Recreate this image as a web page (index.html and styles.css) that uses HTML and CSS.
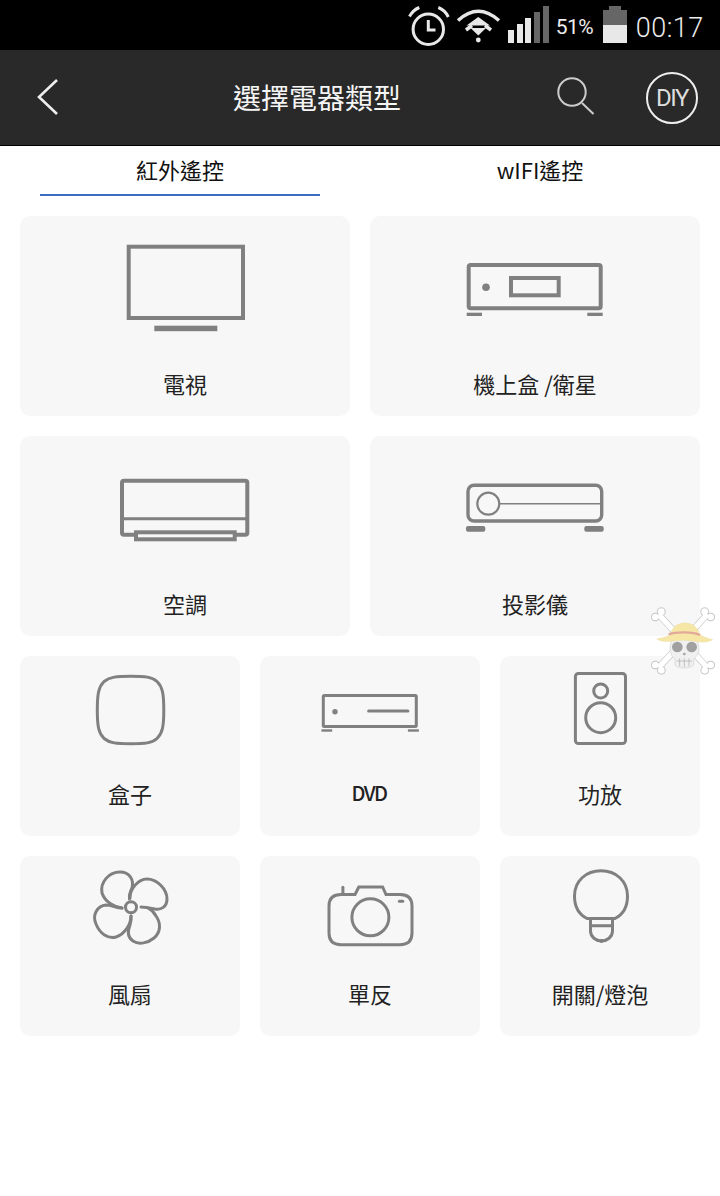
FILE: index.html
```html
<!DOCTYPE html>
<html lang="zh-Hant">
<head>
    <meta charset="UTF-8">
    <meta name="viewport" content="width=device-width, initial-scale=1.0">
    <title>選擇電器類型</title>
    <link rel="stylesheet" href="styles.css">
</head>
<body>
    <div class="status-bar">
        <svg class="status-alarm" width="44" height="50" viewBox="406 0 44 50">
            <circle cx="428.3" cy="29.3" r="15.2"/>
            <path d="M428.3 20V30H435.5"/>
            <path d="M409.5 16.5Q413 10 419.3 7.5M438.3 7.5Q445 10 448.3 17"/>
        </svg>
        <svg class="status-wifi" width="46" height="50" viewBox="456 0 46 50">
            <path class="wifi-arc" d="M458 20.5Q478.3 2 499 20.5"/>
            <path class="wifi-arc" d="M466 30Q470 27 472 25.5M491 30Q487 27 485 25.5"/>
            <path class="wifi-fill" d="M478.3 17L490 25.5H466.5ZM470.5 28H486L478.3 35.5Z"/>
            <circle class="wifi-fill" cx="478.3" cy="40" r="2.4"/>
        </svg>
        <div class="signal">
            <span class="signal-bar bar-1"></span>
            <span class="signal-bar bar-2"></span>
            <span class="signal-bar bar-3"></span>
            <span class="signal-bar bar-4 dim"></span>
            <span class="signal-bar bar-5 dim"></span>
        </div>
        <span class="status-percent">51%</span>
        <div class="battery">
            <span class="battery-nib"></span>
            <span class="battery-body"></span>
        </div>
        <span class="status-time">00:17</span>
    </div>

    <header class="app-bar">
        <svg class="back-icon" width="24" height="40" viewBox="0 0 24 40">
            <path d="M20 2L2 19L20 36"/>
        </svg>
        <h1 class="app-title">選擇電器類型</h1>
        <svg class="search-icon" width="40" height="40" viewBox="0 0 40 40">
            <circle cx="16" cy="15" r="13.7"/>
            <path d="M26 26L37.5 37"/>
        </svg>
        <div class="diy-btn">DIY</div>
    </header>

    <nav class="tabs">
        <div class="tab active">紅外遙控</div>
        <div class="tab">wIFI遙控</div>
    </nav>

    <main class="device-list">
        <div class="device-row">
            <div class="device-card big">
                <svg class="device-icon" viewBox="0 0 330 150">
                    <rect class="thick" x="108.7" y="30.7" width="114.3" height="71.3"/>
                    <rect class="solid" x="134.3" y="109.7" width="63" height="5.5"/>
                </svg>
                <div class="device-name">電視</div>
            </div>
            <div class="device-card big">
                <svg class="device-icon" viewBox="0 0 330 150">
                    <rect class="thick" x="98.7" y="49" width="132" height="43.3" rx="2"/>
                    <rect class="thick" x="141" y="62" width="47.7" height="17.3"/>
                    <circle class="solid" cx="116" cy="71.3" r="3.8"/>
                    <rect class="solid" x="96.7" y="96.7" width="15.3" height="3.3"/>
                    <rect class="solid" x="217.3" y="96.7" width="15.4" height="3.3"/>
                </svg>
                <div class="device-name">機上盒 /衛星</div>
            </div>
        </div>
        <div class="device-row">
            <div class="device-card big">
                <svg class="device-icon" viewBox="0 0 330 150">
                    <rect class="thick" x="102" y="44.7" width="125.3" height="54" rx="2"/>
                    <path class="medium" d="M102 82.7H227"/>
                    <rect class="thick louvre" x="116" y="96.3" width="98.7" height="7"/>
                </svg>
                <div class="device-name">空調</div>
            </div>
            <div class="device-card big">
                <svg class="device-icon" viewBox="0 0 330 150">
                    <rect class="strong" x="98" y="49.3" width="133.7" height="35.7" rx="6"/>
                    <circle class="ring" cx="118.3" cy="67.7" r="11"/>
                    <path class="hairline" d="M129.5 67.7H232"/>
                    <rect class="solid" x="96" y="90" width="19.3" height="5.7" rx="2"/>
                    <rect class="solid" x="214.3" y="90" width="19.4" height="5.7" rx="2"/>
                </svg>
                <div class="device-name">投影儀</div>
            </div>
        </div>
        <div class="device-row">
            <div class="device-card small">
                <svg class="device-icon" viewBox="0 0 220 120">
                    <path class="medium" d="M110.8 20.3C125 20.3 132 20.8 137 25.5C142.6 30.8 143.8 38 143.8 54C143.8 70 142.6 77.2 137 82.5C132 87.2 125 87.7 110.8 87.7C96.6 87.7 89.6 87.2 84.1 82.5C78.5 77.2 77.3 70 77.3 54C77.3 38 78.5 30.8 84.1 25.5C89.6 20.8 96.6 20.3 110.8 20.3Z"/>
                </svg>
                <div class="device-name">盒子</div>
            </div>
            <div class="device-card small">
                <svg class="device-icon" viewBox="0 0 220 120">
                    <rect class="medium" x="63.3" y="39.5" width="93" height="31" rx="1"/>
                    <circle class="solid" cx="75" cy="55.7" r="2.7"/>
                    <path class="medium" d="M108.6 55H147.9"/>
                    <rect class="solid" x="61.4" y="73.3" width="10.8" height="2.4"/>
                    <rect class="solid" x="147.9" y="73.3" width="11" height="2.4"/>
                </svg>
                <div class="device-name latin">DVD</div>
            </div>
            <div class="device-card small narrow">
                <svg class="device-icon" viewBox="0 0 200 120">
                    <rect class="medium" x="75.4" y="17.5" width="50.1" height="70" rx="3"/>
                    <circle class="medium" cx="100.7" cy="35" r="7"/>
                    <circle class="medium" cx="100.7" cy="61.7" r="15"/>
                </svg>
                <div class="device-name">功放</div>
            </div>
        </div>
        <div class="device-row">
            <div class="device-card small">
                <svg class="device-icon" viewBox="0 0 220 120">
                    <circle class="medium" cx="111" cy="51.3" r="5.5"/>
                    <path class="medium" d="M102 52C94 51 85 46 82 37C80 26 89 16 100 16C110 16 114 24 112 32C110 36 109 39 109.5 43"/>
                    <path class="medium" d="M110 42C110 33 118 23 127 23C137 23 147 33 147 43C147 51 141 54 135 53C130 52 125 51 121 51"/>
                    <path class="medium" d="M128 52C132 54 134 56 136 60C141 67 141 76 134 82C128 87 119 89 113 85C107 81 108 74 110 69C111 66 111.5 63 111 60"/>
                    <path class="medium" d="M111 60C111 68 105 78 96 81C88 83 80 78 76 68C72 59 77 50 86 49C92 49 96 52 102 52"/>
                </svg>
                <div class="device-name">風扇</div>
            </div>
            <div class="device-card small">
                <svg class="device-icon" viewBox="0 0 220 120">
                    <path class="medium" d="M95 38.5L98.8 31H122.6L126 38.5H140Q152 38.5 152 50V77Q152 88.7 140 88.7H81Q69 88.7 69 77V50Q69 38.5 81 38.5Z"/>
                    <path class="medium" d="M82.9 31.3V38"/>
                    <circle class="medium" cx="110.4" cy="61.3" r="18.5"/>
                    <rect class="solid" x="137.9" y="43.8" width="6.4" height="3" rx="1.5"/>
                </svg>
                <div class="device-name">單反</div>
            </div>
            <div class="device-card small narrow">
                <svg class="device-icon" viewBox="0 0 200 120">
                    <path class="medium" d="M87 62.5C78 58 74.5 49 74.5 40C74.5 25 86 14.8 101 14.8C116 14.8 127.5 25 127.5 40C127.5 49 124 58 115 62.5Z"/>
                    <path class="medium" d="M90.5 62.5V75C90.5 81 96 85 101.5 85C107 85 112.5 81 112.5 75V62.5M90.5 69.7H112.5"/>
                    <circle class="solid" cx="101.5" cy="85" r="2"/>
                </svg>
                <div class="device-name">開關/燈泡</div>
            </div>
        </div>
    </main>

    <!-- floating straw hat widget -->
    <svg class="skull-widget" width="80" height="90" viewBox="0 0 240 270">
        <g class="bones">
            <path d="M56 58L202 218"/>
            <path d="M202 58L56 218"/>
            <circle cx="46" cy="66" r="12"/><circle cx="64" cy="50" r="12"/>
            <circle cx="212" cy="66" r="12"/><circle cx="194" cy="50" r="12"/>
            <circle cx="46" cy="210" r="12"/><circle cx="64" cy="226" r="12"/>
            <circle cx="212" cy="210" r="12"/><circle cx="194" cy="226" r="12"/>
        </g>
        <g class="bones-fill">
            <path d="M56 58L202 218"/>
            <path d="M202 58L56 218"/>
            <circle cx="46" cy="66" r="10"/><circle cx="64" cy="50" r="10"/>
            <circle cx="212" cy="66" r="10"/><circle cx="194" cy="50" r="10"/>
            <circle cx="46" cy="210" r="10"/><circle cx="64" cy="226" r="10"/>
            <circle cx="212" cy="210" r="10"/><circle cx="194" cy="226" r="10"/>
        </g>
        <path class="skull-head" d="M90 160C90 130 110 118 133 118C156 118 177 130 177 160C177 178 166 188 161 192V210C150 222 116 222 105 210V192C98 188 90 178 90 160Z"/>
        <circle class="skull-eye" cx="112" cy="156" r="16"/>
        <circle class="skull-eye" cx="155" cy="156" r="16"/>
        <circle class="skull-eye" cx="133" cy="177" r="4"/>
        <path class="skull-teeth" d="M110 198H156M119 190V214M133 190V216M147 190V214"/>
        <path class="hat" d="M50 132C70 128 85 125 92 116C96 98 112 84 135 84C158 84 174 98 178 116C186 125 200 128 218 134C190 148 170 138 133 136C100 134 78 148 50 132Z"/>
        <path class="hat-band" d="M86 118C110 110 158 110 180 120"/>
    </svg>
</body>
</html>
```
FILE: styles.css
```css
body {
    font-family: "Noto Sans CJK TC", "Noto Sans", sans-serif;
    background-color: #fff;
    margin: 0;
    padding: 0;
    width: 720px;
    height: 1196px;
    overflow: hidden;
    position: relative;
}

svg {
    display: block;
}

/* status bar */
.status-bar {
    height: 50px;
    background-color: #000;
    color: #ececec;
    display: flex;
    align-items: flex-start;
    padding-left: 406px;
    box-sizing: border-box;
}

.status-alarm {
    fill: none;
    stroke: #e8e8e8;
    stroke-width: 3;
}

.status-wifi {
    margin-left: 6px;
}

.wifi-arc {
    fill: none;
    stroke: #e8e8e8;
    stroke-width: 3.5;
}

.wifi-fill {
    fill: #e8e8e8;
}

.signal {
    display: flex;
    align-items: flex-end;
    gap: 2.7px;
    height: 37px;
    margin: 6px 0 0 6px;
}

.signal-bar {
    width: 6px;
    background-color: #e8e8e8;
}

.signal-bar.dim {
    background-color: #666;
}

.bar-1 { height: 13px; }
.bar-2 { height: 19px; }
.bar-3 { height: 25px; }
.bar-4 { height: 31px; }
.bar-5 { height: 37px; }

.status-percent {
    font-family: "Roboto", sans-serif;
    font-size: 21px;
    line-height: 24px;
    letter-spacing: -0.5px;
    margin: 15px 0 0 7px;
    width: 47px;
}

.battery {
    display: flex;
    flex-direction: column;
    align-items: center;
    width: 24px;
    margin-top: 6px;
}

.battery-nib {
    width: 12px;
    height: 4px;
    background-color: #666;
}

.battery-body {
    width: 24px;
    height: 33px;
    background: linear-gradient(#666 0 15px, #e8e8e8 15px);
}

.status-time {
    font-family: "Roboto", sans-serif;
    font-weight: 300;
    font-size: 27px;
    line-height: 28px;
    letter-spacing: 0.5px;
    margin: 14px 0 0 9px;
}

/* title bar */
.app-bar {
    height: 96px;
    box-sizing: border-box;
    background-color: #292929;
    border-bottom: 1px solid #000;
    display: flex;
    align-items: center;
    color: #f5f5f5;
    padding: 0 22px 0 37px;
}

.back-icon {
    fill: none;
    stroke: #eee;
    stroke-width: 2.6;
}

.app-title {
    font-size: 28px;
    font-weight: 400;
    margin: -2px 0 0 172px;
    line-height: 40px;
}

.search-icon {
    fill: none;
    stroke: #ccc;
    stroke-width: 2;
    margin-left: auto;
    margin-top: -2px;
}

.diy-btn {
    width: 52px;
    height: 52px;
    box-sizing: border-box;
    border: 2.5px solid #eee;
    border-radius: 50%;
    margin-left: 50px;
    display: flex;
    align-items: center;
    justify-content: center;
    font-family: "Roboto", sans-serif;
    font-size: 24px;
    letter-spacing: -1.5px;
    color: #ddd;
}

/* tabs */
.tabs {
    display: flex;
    padding: 0 40px;
    gap: 80px;
}

.tab {
    width: 280px;
    height: 50px;
    box-sizing: border-box;
    text-align: center;
    font-size: 22px;
    line-height: 46px;
    color: #111;
}

.tab.active {
    border-bottom: 2px solid #3b6cbf;
}

/* device cards */
.device-list {
    display: flex;
    flex-direction: column;
    gap: 20px;
    padding: 20px;
}

.device-row {
    display: flex;
    gap: 20px;
}

.device-card {
    background-color: #f7f7f7;
    border-radius: 10px;
}

.device-card.big {
    width: 330px;
    height: 200px;
}

.device-card.small {
    width: 220px;
    height: 180px;
}

.device-card.small.narrow {
    width: 200px;
}

.device-card.big .device-icon {
    height: 150px;
}

.device-card.small .device-icon {
    height: 120px;
}

.device-icon {
    width: 100%;
    fill: none;
    stroke: #808080;
}

.device-icon .thick {
    stroke-width: 4;
}

.device-icon .strong {
    stroke-width: 3.4;
}

.device-icon .ring {
    stroke-width: 2.2;
}

.device-icon .medium {
    stroke-width: 3;
    stroke-linecap: round;
}

.device-icon .hairline {
    stroke-width: 1.5;
}

.device-icon .solid {
    fill: #808080;
    stroke: none;
}

.device-icon .louvre {
    fill: #f7f7f7;
}

.device-name {
    text-align: center;
    font-size: 22px;
    line-height: 34px;
    color: #222;
}

.device-name.latin {
    font-size: 20px;
    font-weight: 500;
    letter-spacing: -1.5px;
    padding-right: 2px;
}

/* floating widget */
.skull-widget {
    position: absolute;
    top: 595px;
    right: 0;
}

.bones {
    fill: #c4c4c4;
    stroke: #c4c4c4;
    stroke-width: 20;
}

.bones circle {
    stroke-width: 2;
}

.bones-fill {
    fill: #fff;
    stroke: #fff;
    stroke-width: 16;
}

.bones-fill circle {
    stroke: none;
}

.skull-head {
    fill: #f0f0f0;
    stroke: #d0d0d0;
    stroke-width: 2;
}

.skull-eye {
    fill: #a0a0a0;
}

.skull-teeth {
    fill: none;
    stroke: #aaa;
    stroke-width: 2;
}

.hat {
    fill: #f6e7a6;
    stroke: #e3d48e;
    stroke-width: 1;
}

.hat-band {
    fill: none;
    stroke: #e2a99a;
    stroke-width: 7;
}
```
